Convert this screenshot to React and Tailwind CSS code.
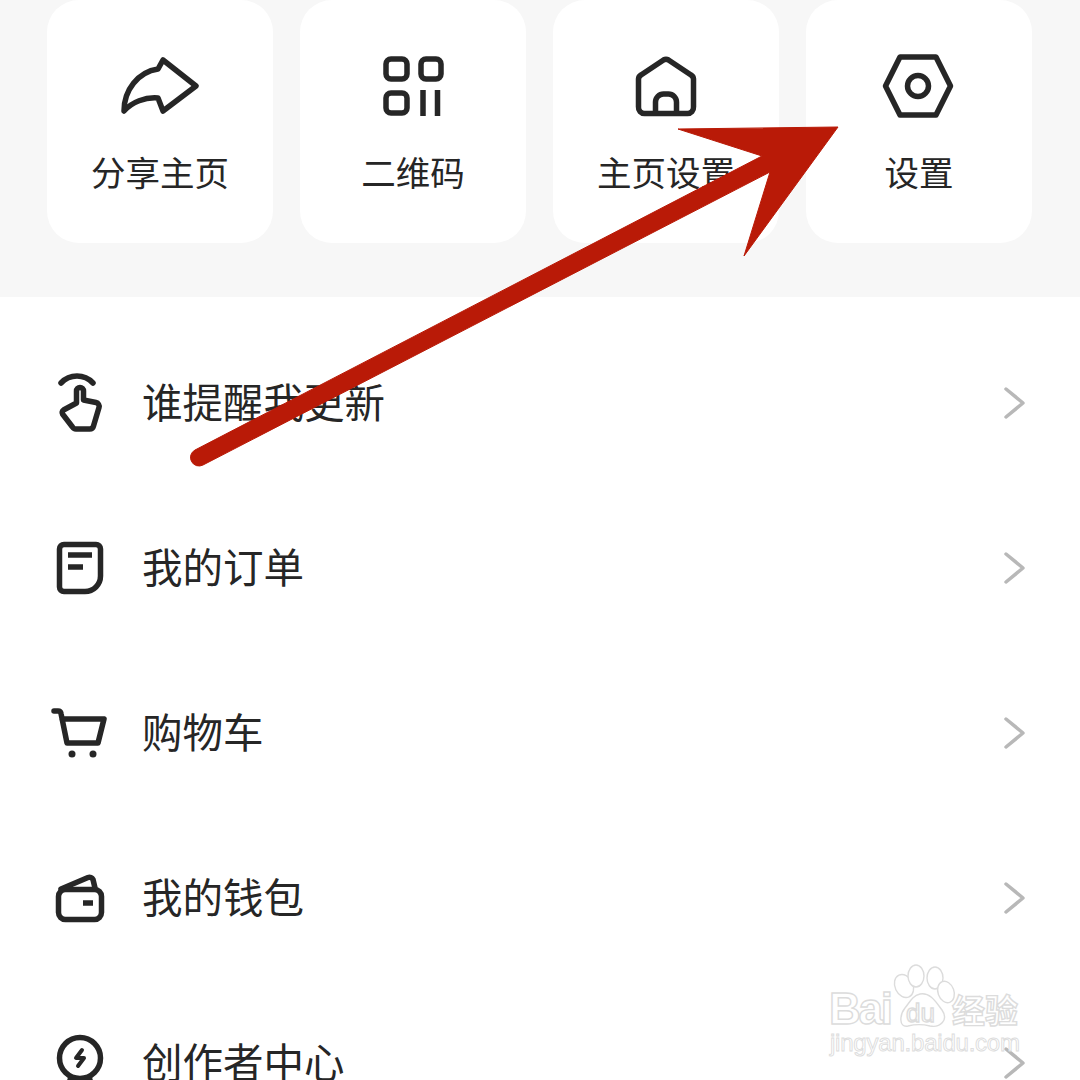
import React from 'react'

const shortcuts = [
  {
    label: '分享主页',
    icon: <path d="M43 5 L76 31 L43 56 L38 43 C25 42 12 47 4 56 C4 35 18 17 38 14 Z" />,
  },
  {
    label: '二维码',
    icon: (
      <>
        <rect x="13" y="4" width="21" height="20" rx="5" />
        <rect x="48" y="4" width="20" height="20" rx="5" />
        <rect x="13" y="38" width="21" height="20" rx="5" />
        <path d="M50 35 V61 M64.5 35 V61" strokeLinecap="butt" />
      </>
    ),
  },
  {
    label: '主页设置',
    icon: (
      <>
        <path d="M12.5 24 a5 5 0 0 1 2.5 -4 L37.5 5 a5 5 0 0 1 5 0 L65 20 a5 5 0 0 1 2.5 4 V52 a6 6 0 0 1 -6 6.5 H18.5 a6 6 0 0 1 -6 -6.5 Z" />
        <path d="M29.5 58 V47 a8 8 0 0 1 8 -8 h5 a8 8 0 0 1 8 8 V58" />
      </>
    ),
  },
  {
    label: '设置',
    icon: (
      <>
        <path d="M6.5 31 L21 2 H57 L71.5 31 L57 60 H21 Z" />
        <circle cx="39" cy="31" r="10.5" />
      </>
    ),
  },
]

const rows = [
  {
    label: '谁提醒我更新',
    icon: (
      <>
        <path d="M11 10 A 22 22 0 0 1 43 10" />
        <path d="M26.5 30 V18 a3.5 3.5 0 0 1 7 0 V27 L46 29.5 a4 4 0 0 1 3 5 L43.5 53 a4 4 0 0 1 -4 3 H26 a4 4 0 0 1 -3.5 -2 L12.5 41 a3 3 0 0 1 1 -4 Z" />
      </>
    ),
  },
  {
    label: '我的订单',
    icon: (
      <>
        <path d="M14 6.5 H46 a4.5 4.5 0 0 1 4.5 4.5 V38 a15.5 15.5 0 0 1 -15.5 15.5 H14 a4.5 4.5 0 0 1 -4.5 -4.5 V11 a4.5 4.5 0 0 1 4.5 -4.5 Z" />
        <path d="M18 17 H42 M18 29 H33" strokeLinecap="butt" />
      </>
    ),
  },
  {
    label: '购物车',
    icon: (
      <>
        <path d="M4 8 H8 a3 3 0 0 1 3 2.5 L17 40 H48 L54 16 H12" />
        <circle cx="22" cy="51" r="3.5" fill="#262626" stroke="none" />
        <circle cx="43" cy="51" r="3.5" fill="#262626" stroke="none" />
      </>
    ),
  },
  {
    label: '我的钱包',
    icon: (
      <>
        <rect x="8.5" y="21.5" width="43" height="30" rx="7" />
        <path d="M11 21 L38 9.5 a4 4 0 0 1 5 2 L45 20" />
        <path d="M33 35 H43" strokeLinecap="butt" />
      </>
    ),
  },
  {
    label: '创作者中心',
    icon: (
      <>
        <circle cx="30" cy="25" r="20.5" />
        <path d="M32 17 L26 25 H34 L28 33" strokeWidth="4" />
        <path d="M20 47 H40" />
      </>
    ),
  },
]

const Chevron = () => (
  <svg viewBox="0 0 24 32" className="w-6 h-8 mr-[54px] shrink-0" fill="none" stroke="#b8b8b8" strokeWidth="3.5" strokeLinecap="round" strokeLinejoin="round">
    <path d="M4 2 L21 16 L4 30" />
  </svg>
)

// arrow and watermark both sit over the page content
const Arrow = () => (
  <svg viewBox="0 0 1080 1080" className="absolute inset-0 w-[1080px] h-[1080px] pointer-events-none">
    <path
      d="M838 127 L678 129 L762 156 L195 450 A8.5 8.5 0 0 0 203 465 L770 172 L744 256 Z"
      fill="#b91a07"
      stroke="#b91a07"
      strokeWidth="1"
      strokeLinejoin="round"
    />
  </svg>
)

const Watermark = () => (
  <svg viewBox="0 0 1080 1080" className="absolute inset-0 w-[1080px] h-[1080px] pointer-events-none">
    <g fill="#ffffff" stroke="#dcdcdc" strokeWidth="1.4">
      <ellipse cx="904" cy="986" rx="9" ry="12" transform="rotate(-25 904 986)" />
      <ellipse cx="916" cy="976" rx="8" ry="11" />
      <ellipse cx="935" cy="978" rx="8" ry="11" />
      <ellipse cx="946" cy="992" rx="8" ry="11" transform="rotate(-20 946 992)" />
      <path d="M920 994 C930 992 936 1002 942 1010 C949 1020 940 1028 930 1026 C922 1024 916 1024 908 1026 C898 1028 900 1014 905 1008 C910 1002 912 996 920 994 Z" />
      <text x="829" y="1024" fontFamily="Liberation Sans, sans-serif" fontSize="44" fontWeight="700" textLength="64">Bai</text>
      <text x="906" y="1022" fontFamily="Liberation Sans, sans-serif" fontSize="26" textLength="29">du</text>
      <text x="952" y="1023" fontFamily="'Noto Sans CJK SC', sans-serif" fontSize="33" fontWeight="700" textLength="66">经验</text>
      <text x="830" y="1051" fontFamily="Liberation Sans, sans-serif" fontSize="24" textLength="190" strokeWidth="0.9">jingyan.baidu.com</text>
    </g>
  </svg>
)

export default function App() {
  return (
    <div className="relative w-[1080px] h-[1080px] overflow-hidden bg-white text-[#262626] font-['Noto_Sans_CJK_SC',sans-serif]">
      <div className="bg-[#f7f7f7] h-[297px] pl-[47px] pr-[48px]">
        <div className="grid grid-cols-4 gap-[27px]">
          {shortcuts.map((s) => (
            <div key={s.label} className="h-[243px] bg-white rounded-[32px] flex flex-col items-center pt-[55px]">
              <svg viewBox="0 0 80 62" className="w-20 h-[62px] overflow-visible" fill="none" stroke="#262626" strokeWidth="5.5" strokeLinecap="round" strokeLinejoin="round">
                {s.icon}
              </svg>
              <div className="mt-[34px] text-[34.5px] leading-10">{s.label}</div>
            </div>
          ))}
        </div>
      </div>

      <div className="pt-[23px]">
        {rows.map((r) => (
          <div key={r.label} className="flex items-center h-[165px]">
            <svg viewBox="0 0 60 60" className="w-[60px] h-[60px] ml-[50px] mr-[32px] shrink-0 overflow-visible" fill="none" stroke="#262626" strokeWidth="5.5" strokeLinecap="round" strokeLinejoin="round">
              {r.icon}
            </svg>
            <div className="flex-1 text-[40.5px] leading-[48px] -mt-1">{r.label}</div>
            <Chevron />
          </div>
        ))}
      </div>

      <Watermark />
      <Arrow />
    </div>
  )
}
